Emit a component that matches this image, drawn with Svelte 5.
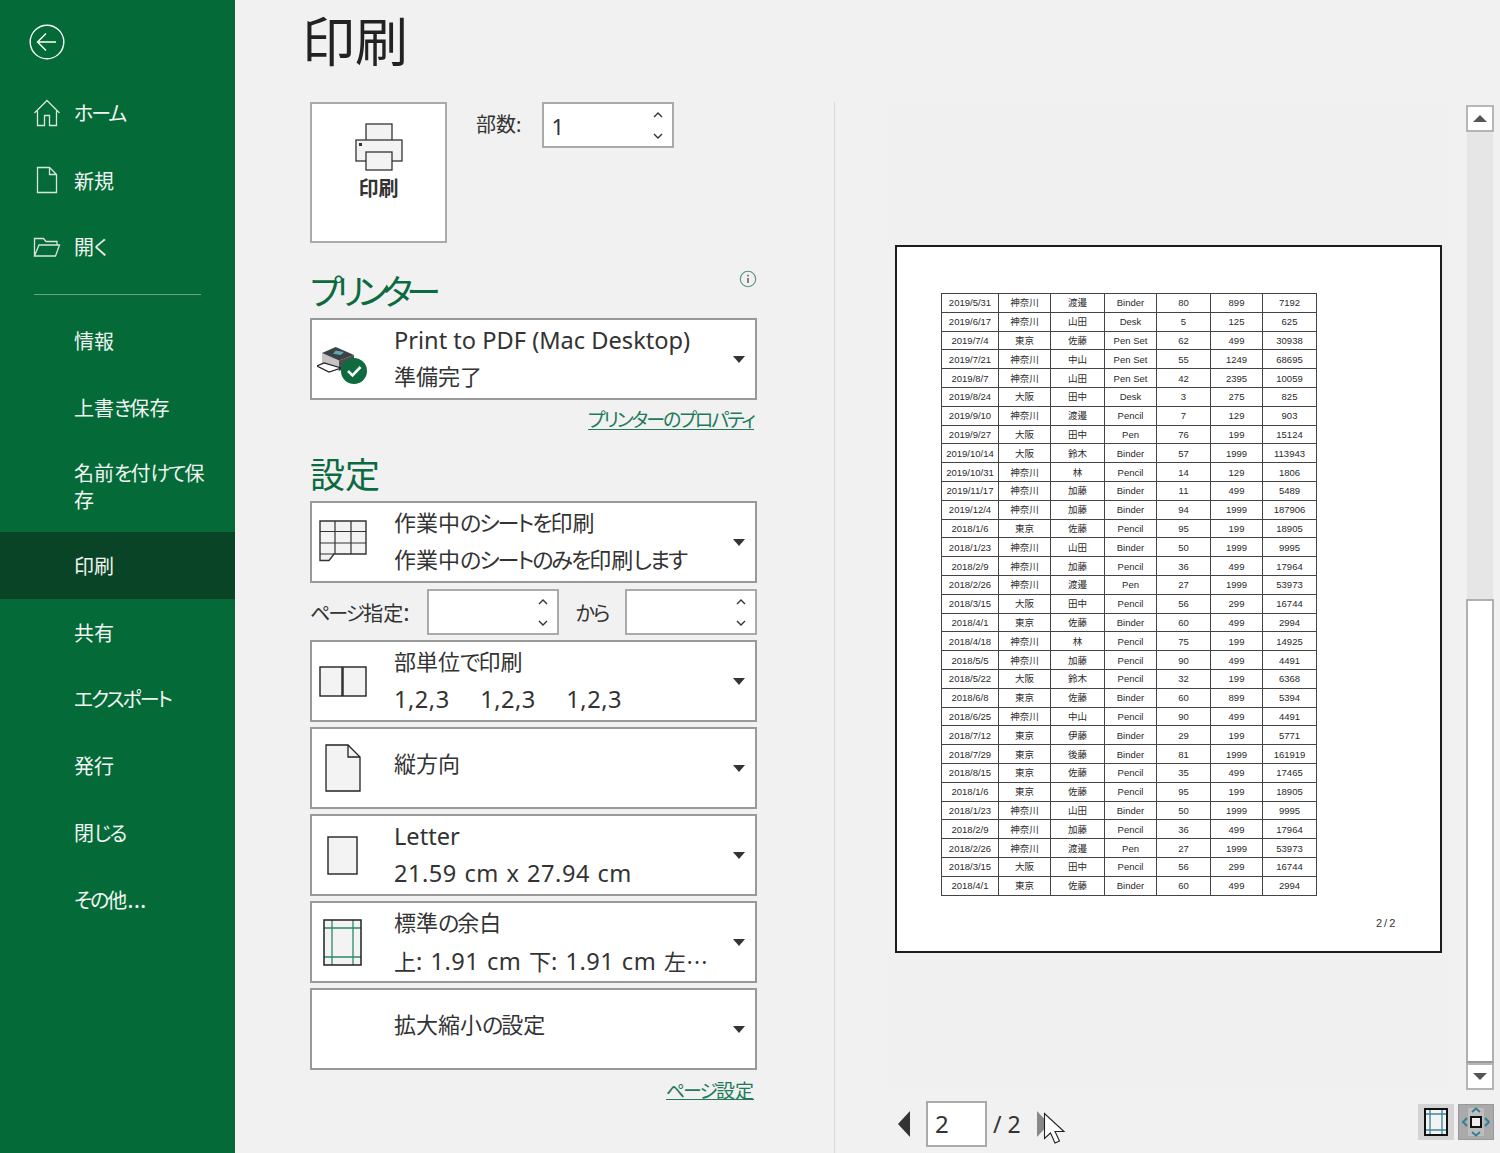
<script>
  const navTop = [
    { label: 'ホーム', icon: 'home' },
    { label: '新規', icon: 'file' },
    { label: '開く', icon: 'open' }
  ];
  const navBottom = ['情報', '上書き保存', '名前を付けて保存', '印刷', '共有', 'エクスポート', '発行', '閉じる', 'その他...'];

  const rows = [
    ['2019/5/31', '神奈川', '渡邉', 'Binder', 80, 899, 7192],
    ['2019/6/17', '神奈川', '山田', 'Desk', 5, 125, 625],
    ['2019/7/4', '東京', '佐藤', 'Pen Set', 62, 499, 30938],
    ['2019/7/21', '神奈川', '中山', 'Pen Set', 55, 1249, 68695],
    ['2019/8/7', '神奈川', '山田', 'Pen Set', 42, 2395, 10059],
    ['2019/8/24', '大阪', '田中', 'Desk', 3, 275, 825],
    ['2019/9/10', '神奈川', '渡邉', 'Pencil', 7, 129, 903],
    ['2019/9/27', '大阪', '田中', 'Pen', 76, 199, 15124],
    ['2019/10/14', '大阪', '鈴木', 'Binder', 57, 1999, 113943],
    ['2019/10/31', '神奈川', '林', 'Pencil', 14, 129, 1806],
    ['2019/11/17', '神奈川', '加藤', 'Binder', 11, 499, 5489],
    ['2019/12/4', '神奈川', '加藤', 'Binder', 94, 1999, 187906],
    ['2018/1/6', '東京', '佐藤', 'Pencil', 95, 199, 18905],
    ['2018/1/23', '神奈川', '山田', 'Binder', 50, 1999, 9995],
    ['2018/2/9', '神奈川', '加藤', 'Pencil', 36, 499, 17964],
    ['2018/2/26', '神奈川', '渡邉', 'Pen', 27, 1999, 53973],
    ['2018/3/15', '大阪', '田中', 'Pencil', 56, 299, 16744],
    ['2018/4/1', '東京', '佐藤', 'Binder', 60, 499, 2994],
    ['2018/4/18', '神奈川', '林', 'Pencil', 75, 199, 14925],
    ['2018/5/5', '神奈川', '加藤', 'Pencil', 90, 499, 4491],
    ['2018/5/22', '大阪', '鈴木', 'Pencil', 32, 199, 6368],
    ['2018/6/8', '東京', '佐藤', 'Binder', 60, 899, 5394],
    ['2018/6/25', '神奈川', '中山', 'Pencil', 90, 499, 4491],
    ['2018/7/12', '東京', '伊藤', 'Binder', 29, 199, 5771],
    ['2018/7/29', '東京', '後藤', 'Binder', 81, 1999, 161919],
    ['2018/8/15', '東京', '佐藤', 'Pencil', 35, 499, 17465],
    ['2018/1/6', '東京', '佐藤', 'Pencil', 95, 199, 18905],
    ['2018/1/23', '神奈川', '山田', 'Binder', 50, 1999, 9995],
    ['2018/2/9', '神奈川', '加藤', 'Pencil', 36, 499, 17964],
    ['2018/2/26', '神奈川', '渡邉', 'Pen', 27, 1999, 53973],
    ['2018/3/15', '大阪', '田中', 'Pencil', 56, 299, 16744],
    ['2018/4/1', '東京', '佐藤', 'Binder', 60, 499, 2994]
  ];

  // split a label so latin, digits and kana can each get their own metrics
  function runs(text) {
    return text.match(/[\x20-\x7e]+|[\u3040-\u30ff]+|[^\x20-\x7e\u3040-\u30ff]/g) ?? [];
  }
  function runClass(s) {
    if (/^[\u3040-\u30ff]/.test(s)) return 'kana';
    if (/^[\x20-\x7e]/.test(s)) return /\d/.test(s) ? 'latin num' : 'latin';
    return 'cjk';
  }
  const noLatin = (s) => !/[\x20-\x7e]/.test(s);
</script>

{#snippet spinner()}
  <span class="spin">
    <svg width="12" height="8" viewBox="0 0 12 8"><path d="M2 6l4-4 4 4" fill="none" stroke="#333" stroke-width="1.4" /></svg>
    <svg width="12" height="8" viewBox="0 0 12 8"><path d="M2 2l4 4 4-4" fill="none" stroke="#333" stroke-width="1.4" /></svg>
  </span>
{/snippet}

{#snippet textLine(text)}
  {#each runs(text) as run}<span class={runClass(run)}>{run}</span>{/each}
{/snippet}

{#snippet dropdown(line1, line2, icon)}
  <div class="dropdown">
    <div class="dd-icon">{@render icon?.()}</div>
    <div class="dd-text" class:single={!line2}>
      <div class="dd-line" class:up={noLatin(line1)}>{@render textLine(line1)}</div>
      {#if line2}<div class="dd-line" class:up={noLatin(line2)}>{@render textLine(line2)}</div>{/if}
    </div>
    <span class="caret"></span>
  </div>
{/snippet}

{#snippet printerIcon()}
  <svg width="52" height="52" viewBox="0 0 52 52">
    <path d="M5 20l17 7.500V38L5 30z" fill="#c4c4c4" />
    <path d="M22 27.500L37 22v10l-15 6z" fill="#4a4f50" />
    <path d="M5 20l13.700-6L37 22l-15 5.500z" fill="#3b4244" />
    <path d="M18.700 17.500L27 19l-3.300 3L16 20.800z" fill="#5fa6b5" />
    <path d="M0 33l7-3 17 5-12 4z" fill="#fff" stroke="#222" stroke-width="1.200" />
    <circle cx="37" cy="38" r="13" fill="#0f6b3f" />
    <path d="M31 38l4.500 4.500 8-8.500" fill="none" stroke="#fff" stroke-width="2.600" />
  </svg>
{/snippet}

{#snippet sheetIcon()}
  <svg width="48" height="44" viewBox="0 0 48 44">
    <path d="M1 1h46v33H15l-5 6.500H1z" fill="#f3f3f3" stroke="#333" stroke-width="1.400" />
    <path d="M1 11.500h46M1 23h46M1 34h14M16 1v33M32 1v33" fill="none" stroke="#333" stroke-width="1.200" />
  </svg>
{/snippet}

{#snippet collateIcon()}
  <svg width="48" height="31" viewBox="0 0 48 31">
    <rect x="1" y="1" width="22" height="29" fill="#f3f3f3" stroke="#222" stroke-width="1.400" />
    <rect x="24" y="1" width="23" height="29" fill="#f3f3f3" stroke="#222" stroke-width="1.400" />
  </svg>
{/snippet}

{#snippet portraitIcon()}
  <svg width="36" height="48" viewBox="0 0 36 48">
    <path d="M1 1h22l12 12v34H1z" fill="#f3f3f3" stroke="#222" stroke-width="1.300" />
    <path d="M23 1v12h12" fill="none" stroke="#222" stroke-width="1.300" />
  </svg>
{/snippet}

{#snippet letterIcon()}
  <svg width="31" height="39" viewBox="0 0 31 39">
    <rect x="1" y="1" width="29" height="37" fill="#f3f3f3" stroke="#222" stroke-width="1.400" />
  </svg>
{/snippet}

{#snippet marginIcon()}
  <svg width="39" height="47" viewBox="0 0 39 47">
    <rect x="1" y="1" width="37" height="45" fill="#f3f3f3" />
    <path d="M9 1v45M30 1v45M1 9h37M1 38h37" fill="none" stroke="#2a8a6a" stroke-width="1.300" />
    <rect x="1" y="1" width="37" height="45" fill="none" stroke="#222" stroke-width="1.500" />
  </svg>
{/snippet}

<div class="screen">
  <aside class="sidebar">
    <div class="back">
      <svg width="36" height="36" viewBox="0 0 36 36">
        <circle cx="18" cy="18" r="16.800" fill="none" stroke="#fff" stroke-width="1.400" />
        <path d="M27 18H9M17 9.500L8.500 18l8.500 8.500" fill="none" stroke="#fff" stroke-width="1.400" />
      </svg>
    </div>

    <nav class="nav-top">
      {#each navTop as item}
        <div class="nav-item">
          <span class="nav-icon">
            {#if item.icon === 'home'}
              <svg width="28" height="28" viewBox="0 0 28 28"><path d="M1.500 14L14 1.500 26.500 14M4.500 12v14.500h7V16.500h5v10h7V12" fill="none" stroke="#d8e5dd" stroke-width="1.300" /></svg>
            {:else if item.icon === 'file'}
              <svg width="28" height="28" viewBox="0 0 28 28"><path d="M4.500 1.500h12l7 7v18h-19zM16.500 1.500v7h7" fill="none" stroke="#d8e5dd" stroke-width="1.300" /></svg>
            {:else}
              <svg width="28" height="28" viewBox="0 0 28 28"><path d="M1.500 23V5.500h9l2.500 3h11v3.500M1.500 23h21l4-11H6z" fill="none" stroke="#d8e5dd" stroke-width="1.300" /></svg>
            {/if}
          </span>
          <span class="nav-label">{@render textLine(item.label)}</span>
        </div>
      {/each}
    </nav>

    <div class="nav-rule"></div>

    <nav class="nav-bottom">
      {#each navBottom as label}
        <div class="nav-item" class:active={label === '印刷'} class:tall={label.length > 6}>
          <span class="nav-label">{@render textLine(label)}</span>
        </div>
      {/each}
    </nav>
  </aside>

  <main class="main">
    <h1>印刷</h1>

    <div class="columns">
      <section class="settings">
        <div class="print-row">
          <button class="print-btn">
            <svg width="48" height="48" viewBox="0 0 48 48">
              <rect x="11" y="1" width="26" height="18" fill="#f3f3f3" stroke="#333" stroke-width="1.300" />
              <rect x="1" y="17" width="46" height="21" fill="#f3f3f3" stroke="#333" stroke-width="1.300" />
              <rect x="4" y="20" width="3" height="3" fill="#333" />
              <rect x="11" y="29" width="26" height="18" fill="#f3f3f3" stroke="#333" stroke-width="1.300" />
            </svg>
            <span>印刷</span>
          </button>
          <span class="copies-label">部数:</span>
          <div class="spinbox copies"><span class="value">1</span>{@render spinner()}</div>
        </div>

        <div class="printer-head">
          <h2 class="tight">プリンター</h2>
          <svg class="info" width="18" height="18" viewBox="0 0 18 18">
            <circle cx="9" cy="9" r="7.700" fill="none" stroke="#5f8f82" stroke-width="1.100" />
            <path d="M9 8v5" stroke="#444" stroke-width="1.300" />
            <rect x="8.300" y="4.800" width="1.400" height="1.500" fill="#444" />
          </svg>
        </div>
        {@render dropdown('Print to PDF (Mac Desktop)', '準備完了', printerIcon)}
        <div class="link-row"><span class="link">{@render textLine('プリンターのプロパティ')}</span></div>

        <h2 class="settings-head">設定</h2>
        <div class="stack">
          {@render dropdown('作業中のシートを印刷', '作業中のシートのみを印刷します', sheetIcon)}
          <div class="page-range">
            <span class="range-label">{@render textLine('ページ指定:')}</span>
            <div class="spinbox">{@render spinner()}</div>
            <span class="range-from">{@render textLine('から')}</span>
            <div class="spinbox">{@render spinner()}</div>
          </div>
          {@render dropdown('部単位で印刷', '1,2,3    1,2,3    1,2,3', collateIcon)}
          {@render dropdown('縦方向', '', portraitIcon)}
          {@render dropdown('Letter', '21.59 cm x 27.94 cm', letterIcon)}
          {@render dropdown('標準の余白', '上: 1.91 cm 下: 1.91 cm 左…', marginIcon)}
          {@render dropdown('拡大縮小の設定', '')}
        </div>
        <div class="link-row"><span class="link">{@render textLine('ページ設定')}</span></div>
      </section>

      <div class="vrule"></div>

      <section class="preview-col">
        <div class="preview-top">
          <div class="preview">
            <div class="page">
              <table>
                <colgroup>
                  <col style="width:57px" /><col style="width:52px" /><col style="width:54px" /><col style="width:52px" /><col style="width:54px" /><col style="width:52px" /><col style="width:54px" />
                </colgroup>
                <tbody>
                  {#each rows as row}
                    <tr>
                      {#each row as cell}<td>{cell}</td>{/each}
                    </tr>
                  {/each}
                </tbody>
              </table>
              <div class="page-no">2/2</div>
            </div>
          </div>
          <div class="scrollbar">
            <div class="sb-btn"><span class="tri up"></span></div>
            <div class="sb-track"></div>
            <div class="sb-thumb"></div>
            <div class="sb-btn"><span class="tri down"></span></div>
          </div>
        </div>

        <div class="pager">
          <span class="arrow left"></span>
          <div class="page-input">2</div>
          <span class="total">/ 2</span>
          <span class="arrow right"></span>
          <div class="cursor">
            <svg width="24" height="34" viewBox="0 0 24 34">
              <path d="M1.500 1.500v25l6-5.500 4.500 10 4.500-2-4.500-9.500H21z" fill="#fff" stroke="#222" stroke-width="1.100" />
            </svg>
          </div>
          <div class="view-btns">
            <div class="view-btn">
              <svg width="24" height="28" viewBox="0 0 24 28">
                <rect x="1" y="1" width="22" height="26" fill="#f3f3f3" />
                <path d="M6 1v26M18 1v26M1 6h22M1 22h22" fill="none" stroke="#3a8a9a" stroke-width="1.400" />
                <rect x="1" y="1" width="22" height="26" fill="none" stroke="#111" stroke-width="2" />
              </svg>
            </div>
            <div class="view-btn dark">
              <svg width="32" height="34" viewBox="0 0 32 34">
                <rect x="8" y="3" width="16" height="28" fill="#bdbdbd" />
                <path d="M27 17h4M3 15h3M3 19h3" stroke="#c4c4c4" stroke-width="1.500" />
                <rect x="11" y="12" width="10" height="10" fill="#eee" stroke="#111" stroke-width="2" />
                <path d="M12 7l4-3.500L20 7M12 27l4 3.500 4-3.500M7 13l-4 4 4 4M25 13l4 4-4 4" fill="none" stroke="#2f7f94" stroke-width="2" />
              </svg>
            </div>
          </div>
        </div>
      </section>
    </div>
  </main>
</div>

<style>
  :global(body) {
    margin: 0;
    background: #f1f1f1;
  }

  .screen {
    display: flex;
    width: 1500px;
    height: 1153px;
    overflow: hidden;
    font-family: "Noto Sans", "Noto Sans CJK JP", sans-serif;
    font-feature-settings: "palt";
    color: #333;
    background: #f1f1f1;
  }

  .kana {
    letter-spacing: -2px;
  }

  .cjk {
    font-family: "Noto Sans CJK JP", sans-serif;
  }

  /* left green rail */
  .sidebar {
    width: 235px;
    flex: none;
    background: #046a38;
    color: #f0f5f2;
    font-size: 20px;
  }

  .back {
    height: 80px;
    padding: 24px 0 0 29px;
    box-sizing: border-box;
  }

  .nav-item {
    display: flex;
    align-items: center;
    height: 66.800px;
    padding: 0 30px 0 74px;
    box-sizing: border-box;
    line-height: 26px;
    position: relative;
  }

  .nav-label {
    padding-top: 2px;
  }

  .nav-item.tall {
    height: 91px;
  }

  .nav-item.active {
    background: #0a4426;
  }

  .nav-top .nav-item {
    padding-left: 33px;
    gap: 13px;
  }

  .nav-icon {
    display: flex;
    width: 28px;
  }

  .nav-rule {
    height: 1px;
    margin: 14px 34px 12px;
    background: #6f9f86;
  }

  h1 {
    margin: 0;
    padding: 8px 0 0 67px;
    height: 102px;
    box-sizing: border-box;
    font-size: 53px;
    font-weight: 400;
    line-height: 68px;
    color: #222;
  }

  .main {
    flex: 1;
    min-width: 0;
  }

  .columns {
    display: flex;
    padding-left: 75px;
  }

  .settings {
    width: 447px;
    flex: none;
  }

  .print-row {
    display: flex;
    align-items: flex-start;
  }

  .print-btn {
    display: flex;
    flex-direction: column;
    align-items: center;
    width: 137px;
    height: 141px;
    padding: 19px 0 0;
    box-sizing: border-box;
    background: #fff;
    border: 2px solid #aaa;
    font: inherit;
    font-size: 20px;
    font-weight: 700;
    line-height: 24px;
    color: #333;
  }

  .print-btn span {
    margin-top: 6px;
  }

  .copies-label {
    margin: 9px 21px 0 29px;
    font-size: 20px;
    line-height: 28px;
  }

  .spinbox {
    position: relative;
    width: 132px;
    height: 46px;
    box-sizing: border-box;
    background: #fff;
    border: 2px solid #aaa;
    font-size: 22px;
    line-height: 44px;
  }

  .spinbox .value {
    padding-left: 7px;
  }

  .spin {
    position: absolute;
    top: 7px;
    right: 8px;
    display: flex;
    flex-direction: column;
    gap: 13px;
  }

  .spin svg {
    display: block;
  }

  .printer-head {
    display: flex;
    justify-content: space-between;
    height: 75px;
    padding-top: 27px;
    box-sizing: border-box;
  }

  h2 {
    margin: 0;
    font-size: 35px;
    font-weight: 400;
    line-height: 44px;
    color: #0b6b3f;
  }

  h2.tight {
    letter-spacing: -6.500px;
  }

  .dropdown {
    display: flex;
    position: relative;
    height: 82px;
    box-sizing: border-box;
    background: #fff;
    border: 2px solid #999;
    align-items: center;
  }

  .dd-icon {
    display: flex;
    align-items: center;
    justify-content: center;
    width: 61px;
    flex: none;
    margin-right: 21px;
  }

  .dd-text {
    font-size: 22px;
    line-height: 37.500px;
    color: #333;
  }

  .dd-line {
    position: relative;
    height: 37.500px;
    white-space: pre;
  }

  .dd-line.up {
    top: -2px;
  }

  .latin {
    font-size: 23.600px;
  }

  .num {
    letter-spacing: 0.500px;
    word-spacing: 1px;
  }

  .dd-text.single {
    margin-top: -7px;
  }

  .caret {
    position: absolute;
    right: 10px;
    top: 36px;
    border-left: 6.500px solid transparent;
    border-right: 6.500px solid transparent;
    border-top: 7px solid #333;
  }

  .link-row {
    display: flex;
    justify-content: flex-end;
    padding: 6px 3px 0 0;
    height: 34px;
    box-sizing: border-box;
  }

  .link {
    font-size: 19px;
    line-height: 28px;
    color: #217a5b;
    border-bottom: 1px solid #217a5b;
    height: 23px;
  }

  .settings-head {
    height: 67px;
    padding-top: 18px;
    box-sizing: border-box;
    line-height: 46px;
  }

  .stack {
    display: flex;
    flex-direction: column;
    gap: 5px;
  }

  .page-range {
    display: flex;
    align-items: center;
    height: 46px;
    margin-top: 1px;
    font-size: 20px;
  }

  .range-label {
    width: 117px;
    white-space: nowrap;
  }

  .range-from {
    width: 66px;
    text-align: center;
  }

  .vrule {
    width: 1px;
    height: 1051px;
    margin: 0 52px 0 77px;
    background: #d8d8d8;
    flex: none;
  }

  .preview-col {
    width: 607px;
    flex: none;
  }

  .preview-top {
    display: flex;
    align-items: stretch;
    height: 985px;
    margin-top: 3px;
  }

  .preview {
    width: 562px;
    flex: none;
    padding: 140px 0 0 8px;
    box-sizing: border-box;
    background: #f0f0f0;
  }

  .page {
    width: 547px;
    height: 708px;
    box-sizing: border-box;
    padding: 46px 0 0 44px;
    background: #fff;
    border: 2px solid #1c1c1c;
  }

  table {
    border-collapse: collapse;
    table-layout: fixed;
    width: 375px;
    font-family: "Liberation Sans", "Noto Sans CJK JP", sans-serif;
    font-size: 9.500px;
    color: #2a2a2a;
  }

  td {
    height: 16.800px;
    padding: 1px 0 0;
    border: 1px solid #444;
    text-align: center;
    line-height: 10px;
    white-space: nowrap;
  }

  .page-no {
    margin: 21px 0 0 435px;
    font-family: "Liberation Sans", sans-serif;
    font-size: 11px;
    letter-spacing: 2px;
    color: #333;
  }

  .scrollbar {
    width: 28px;
    margin-left: 17px;
    display: flex;
    flex-direction: column;
  }

  .sb-btn {
    display: flex;
    align-items: center;
    justify-content: center;
    height: 27px;
    flex: none;
    box-sizing: border-box;
    background: #fff;
    border: 2px solid #b5b5b5;
  }

  .sb-track {
    height: 467px;
    flex: none;
    margin: 0 1px;
    background: #e6e6e6;
  }

  .sb-thumb {
    flex: 1;
    box-sizing: border-box;
    background: #fff;
    border: 2px solid #b0b0b0;
    border-bottom-color: #999;
  }

  .tri {
    border-left: 7px solid transparent;
    border-right: 7px solid transparent;
  }

  .tri.up {
    border-bottom: 7px solid #555;
  }

  .tri.down {
    border-top: 7px solid #555;
  }

  .pager {
    display: flex;
    align-items: center;
    position: relative;
    height: 46px;
    margin-top: 11px;
    padding-left: 11px;
  }

  .arrow {
    border-top: 13px solid transparent;
    border-bottom: 13px solid transparent;
  }

  .arrow.left {
    border-right: 12px solid #333;
  }

  .arrow.right {
    border-left: 12px solid #888;
    margin-left: 16px;
  }

  .page-input {
    width: 61px;
    height: 46px;
    box-sizing: border-box;
    margin-left: 16px;
    padding-left: 7px;
    background: #fff;
    border: 2px solid #aaa;
    font-size: 24px;
    line-height: 42px;
  }

  .total {
    margin-left: 6px;
    font-size: 23px;
    white-space: nowrap;
  }

  .cursor {
    position: absolute;
    left: 156px;
    top: 11px;
  }

  .cursor svg {
    display: block;
  }

  .view-btns {
    position: absolute;
    right: 0;
    top: 3px;
    display: flex;
    gap: 4px;
  }

  .view-btn {
    display: flex;
    align-items: center;
    justify-content: center;
    width: 36px;
    height: 36px;
    background: #d4d4d4;
  }

  .view-btn.dark {
    background: #aaa;
    border: 1px solid #999;
    box-sizing: border-box;
  }
</style>
